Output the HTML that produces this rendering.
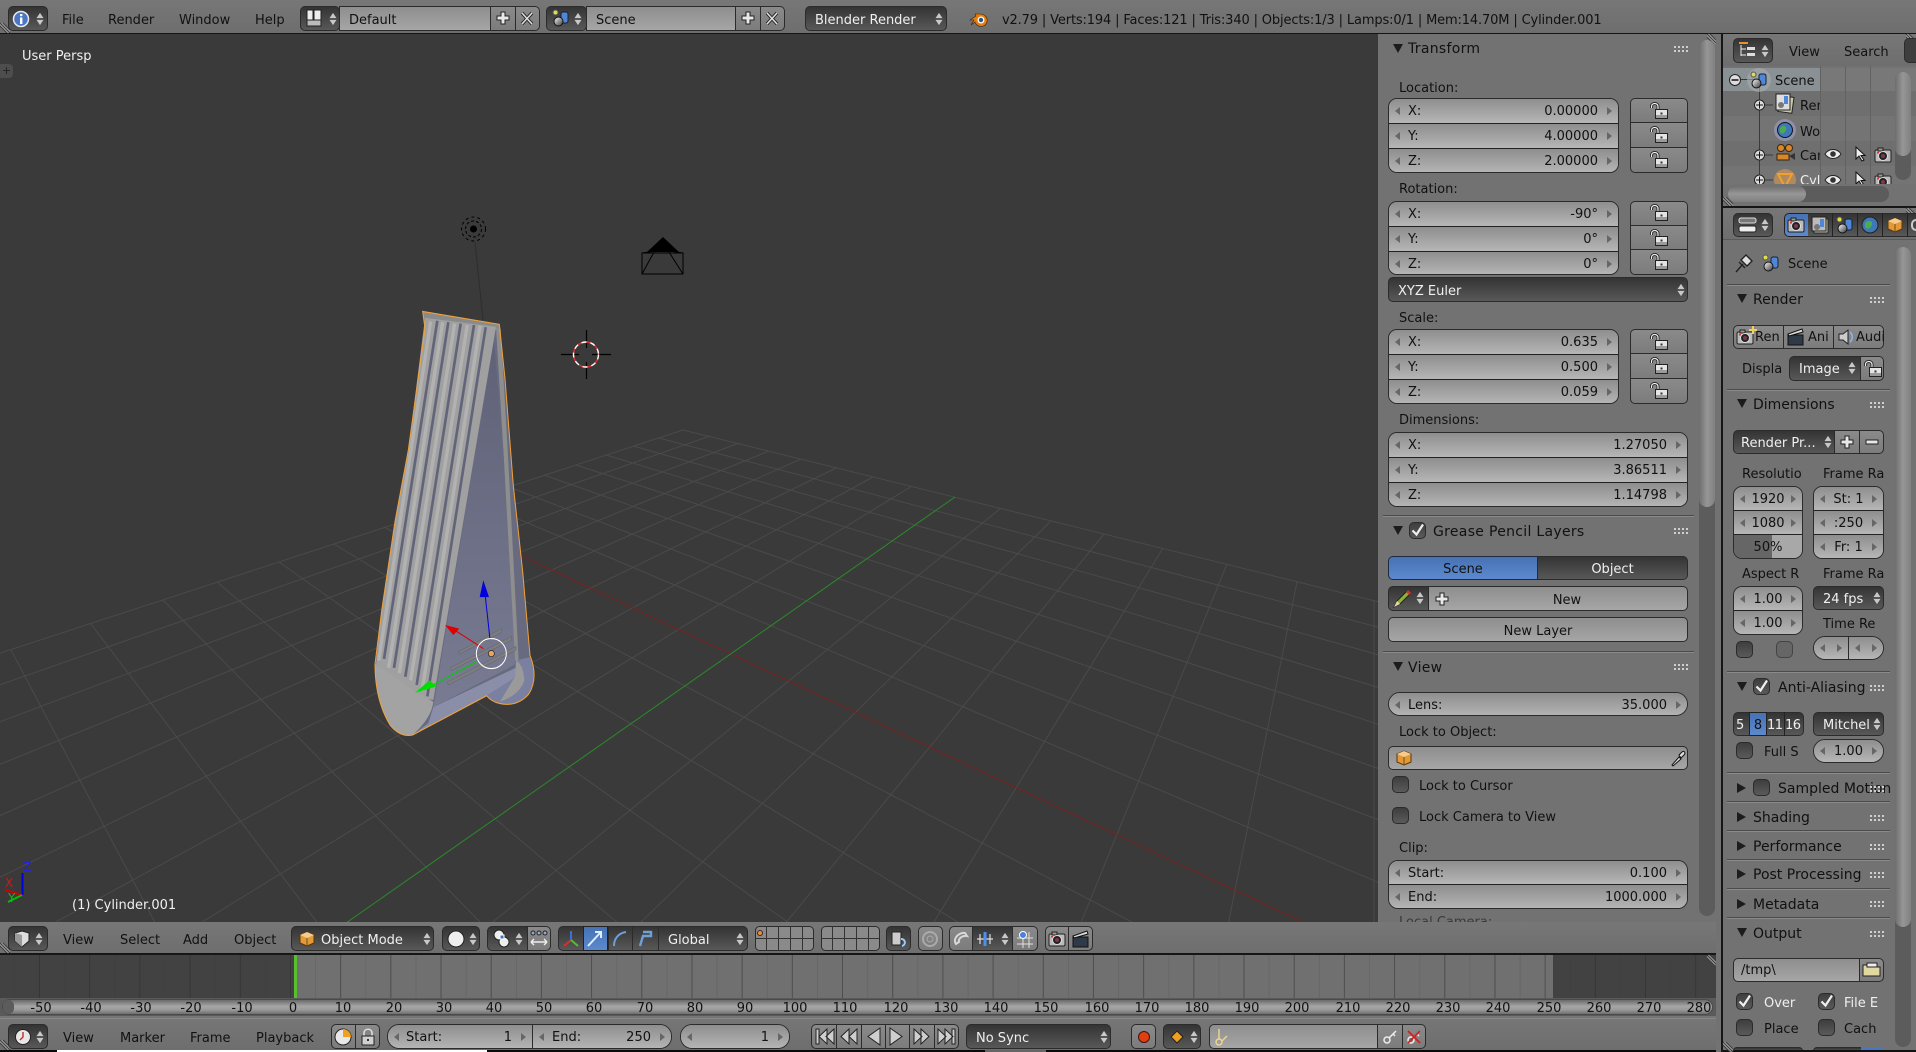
<!DOCTYPE html>
<html><head><meta charset="utf-8"><title>Blender</title>
<style>
html,body{margin:0;padding:0;background:#727272;width:1916px;height:1052px;overflow:hidden}
body{position:relative;font-family:"DejaVu Sans","Liberation Sans",sans-serif;font-size:13px;color:#111}
div{position:absolute;white-space:nowrap;box-sizing:border-box}
svg{position:absolute;overflow:visible}
.t{height:16px;line-height:16px;margin-top:1px}
.w{color:#f0f0f0}
.ls{letter-spacing:.3px}
.dk{background:linear-gradient(#343434,#585858);border:1px solid #2b2b2b;border-radius:5px;color:#f0f0f0}
.gb{background:linear-gradient(#8e8e8e,#a6a6a6);border:1px solid #2b2b2b;border-radius:5px}
.pb{background:linear-gradient(#8a8a8a,#7c7c7c);border:1px solid #2b2b2b;border-radius:5px}
.n{border:1px solid #2b2b2b;border-radius:9px;overflow:hidden;background:#9a9a9a}
.r{left:0;right:0;background:linear-gradient(#8e8e8e,#b6b6b6);border-bottom:1px solid #222}
.r:last-child{border-bottom:0}
.r .k{left:19px;top:50%;margin-top:-7px;height:16px;line-height:16px}
.r .v{right:20px;top:50%;margin-top:-7px;height:16px;line-height:16px}
.r .m{left:0;right:0;text-align:center;top:50%;margin-top:-7px;height:16px;line-height:16px}
.r i,.n i{position:absolute;top:50%;margin-top:-4px;width:0;height:0;border-top:4px solid transparent;border-bottom:4px solid transparent}
i.a{left:6px;border-right:5px solid #666}
i.c{right:6px;border-left:5px solid #666}
.cb{background:linear-gradient(#3e3e3e,#5a5a5a);border:1px solid #2b2b2b;border-radius:5px;width:17px;height:17px}
.ln{height:1px;background:#4b4b4b;border-bottom:1px solid #8a8a8a;height:2px}
.tr{width:0;height:0;border-left:5px solid transparent;border-right:5px solid transparent;border-top:9px solid #1c1c1c}
.trr{width:0;height:0;border-top:5px solid transparent;border-bottom:5px solid transparent;border-left:9px solid #1c1c1c}
.hd{background:linear-gradient(#777,#6e6e6e)}
.tl{text-align:center;width:40px;height:16px;line-height:16px;margin-top:2px}
</style></head><body>

<svg width="0" height="0" style="position:absolute">
<defs>
<linearGradient id="gs" x1="0" y1="0" x2="1" y2="1"><stop offset="0" stop-color="#fff"/><stop offset="1" stop-color="#333"/></linearGradient>
<linearGradient id="pg" x1="0" y1="0" x2="0" y2="1"><stop offset="0" stop-color="#5f6277"/><stop offset="1" stop-color="#787b92"/></linearGradient>
<symbol id="ud" viewBox="0 0 8 16" overflow="visible"><path d="M4 1 8 7H0zM0 9h8l-4 6z" fill="#c8c8c8"/></symbol>
<symbol id="lock" viewBox="0 0 18 18" overflow="visible"><path d="M1.500 6V4.500C1.500 .5 8 .5 8 4.500V8" fill="none" stroke="#222" stroke-width="3"/><path d="M1.500 6V4.500C1.500 .5 8 .5 8 4.500V8" fill="none" stroke="#f0f0f0" stroke-width="1.200"/><rect x="5.500" y="7.500" width="12" height="9" fill="#e4e4e4" stroke="#222"/><rect x="6" y="13" width="11" height="3" fill="#9a9a9a"/><rect x="10.500" y="10.500" width="2" height="2" fill="#333"/></symbol>
<symbol id="plus" viewBox="0 0 16 16" overflow="visible"><path d="M6 2h4v4h4v4h-4v4H6v-4H2V6h4z" fill="#e8e8e8" stroke="#222"/></symbol>
<symbol id="minus" viewBox="0 0 16 16" overflow="visible"><rect x="2" y="6" width="12" height="4" fill="#e8e8e8" stroke="#222"/></symbol>
<symbol id="x" viewBox="0 0 16 16" overflow="visible"><path d="M3 3 13 14M13 3 3 14" stroke="#222" stroke-width="3.400" fill="none"/><path d="M3 3 13 14M13 3 3 14" stroke="#ddd" stroke-width="1.600" fill="none"/></symbol>
<symbol id="scene" viewBox="0 0 18 18" overflow="visible"><rect x="9" y="3" width="7" height="11" rx="2" fill="#4f86d8" stroke="#123"/><circle cx="3.500" cy="3.500" r="2.500" fill="#dcdc50" stroke="#555"/><circle cx="6.500" cy="12.500" r="4.500" fill="url(#gs)" stroke="#111"/></symbol>
<symbol id="cube" viewBox="0 0 16 16" overflow="visible"><path d="M8 1 15 4V12L8 15 1 12V4z" fill="#e09a3a" stroke="#5a3508"/><path d="M1 4 8 7 15 4 8 1z" fill="#f6cc8c"/><path d="M8 7V15" stroke="#7a4a10"/></symbol>
<symbol id="cam" viewBox="0 0 18 18" overflow="visible"><rect x="1" y="4" width="16" height="12" rx="1.500" fill="#bbb" stroke="#222"/><rect x="4" y="2" width="5" height="3" fill="#999" stroke="#222"/><circle cx="9" cy="10" r="4.500" fill="#222" stroke="#ddd"/><circle cx="9" cy="10" r="2" fill="#7a3a4a"/><rect x="3" y="6" width="2" height="1.500" fill="#d33"/></symbol>
<symbol id="eye" viewBox="0 0 18 12" overflow="visible"><path d="M1 6C5 0 13 0 17 6 13 12 5 12 1 6z" fill="#eee" stroke="#222"/><circle cx="9" cy="6" r="2.800" fill="#333"/></symbol>
<symbol id="arrow" viewBox="0 0 12 16" overflow="visible"><path d="M2 1V13L5 10 8 15 10 14 7 9.500H11z" fill="#eee" stroke="#111"/></symbol>
<symbol id="dots" viewBox="0 0 14 6" overflow="visible"><path d="M0 0h2v2H0zM4 0h2v2H4zM8 0h2v2H8zM12 0h2v2h-2zM0 4h2v2H0zM4 4h2v2H4zM8 4h2v2H8zM12 4h2v2h-2z" fill="#cfcfcf"/></symbol>
<symbol id="hat" viewBox="0 0 10 10" overflow="visible"><path d="M0 0 10 10M0 3 7 10M3 0 10 7" stroke="#3c3c3c" stroke-width="1" fill="none"/><path d="M0 1.500 8.500 10M1.500 0 10 8.500" stroke="#a0a0a0" stroke-width="1" fill="none"/></symbol>
<symbol id="check" viewBox="0 0 17 17" overflow="visible"><path d="M3.500 8.500 7.500 12.500 14 2.500" fill="none" stroke="#f0f0f0" stroke-width="2.200"/></symbol>
<symbol id="key" viewBox="0 0 16 16" overflow="visible"><circle cx="5" cy="11" r="3" fill="none" stroke="#eee" stroke-width="1.500"/><path d="M7 9 14 2M11 5 13 7" stroke="#eee" stroke-width="1.500"/></symbol>
<symbol id="clock" viewBox="0 0 18 18" overflow="visible"><circle cx="9" cy="9" r="7.500" fill="#e8e8e8" stroke="#222"/><path d="M9 4V9L6 12" stroke="#c33" stroke-width="1.500" fill="none"/></symbol>
</defs>
</svg>

<!-- top bar -->
<div class="hd" style="left:0;top:0;width:1916px;height:33px"></div>
<div style="left:0;top:33px;width:1916px;height:1px;background:#141414"></div>
<svg width="10" height="10" style="left:0;top:23px"><use href="#hat"/></svg>
<div class="dk" style="left:8px;top:6px;width:40px;height:25px"></div>
<svg width="18" height="18" style="left:12px;top:10px"><circle cx="9" cy="9" r="7.500" fill="#4a76c4" stroke="#e8e8e8" stroke-width="1.500"/><rect x="8" y="7.500" width="2.400" height="6.500" fill="#fff"/><rect x="8" y="4" width="2.400" height="2.200" fill="#fff"/></svg>
<svg width="8" height="14" style="left:36px;top:12px"><use href="#ud"/></svg>
<div class="t" style="left:62px;top:12px">File</div>
<div class="t" style="left:108px;top:12px">Render</div>
<div class="t" style="left:179px;top:12px">Window</div>
<div class="t" style="left:255px;top:12px">Help</div>
<div class="dk" style="left:300px;top:6px;width:40px;height:25px"></div>
<svg width="16" height="18" style="left:307px;top:10px"><rect x="0" y="0" width="6" height="16" fill="#eee" stroke="#222"/><rect x="7" y="0" width="7" height="16" fill="#eee" stroke="#222"/><rect x="0" y="10" width="14" height="6" fill="#bbb" stroke="#222"/></svg>
<svg width="8" height="14" style="left:329px;top:12px"><use href="#ud"/></svg>
<div class="gb" style="left:339px;top:6px;width:152px;height:25px;border-radius:0"></div><div class="t" style="left:349px;top:12px">Default</div>
<div class="pb" style="left:490px;top:6px;width:26px;height:25px;border-radius:0"></div>
<div class="pb" style="left:515px;top:6px;width:25px;height:25px;border-radius:0 5px 5px 0"></div>
<svg width="16" height="16" style="left:495px;top:10px"><use href="#plus"/></svg>
<svg width="16" height="16" style="left:519px;top:10px"><use href="#x"/></svg>
<div class="dk" style="left:546px;top:6px;width:41px;height:25px"></div>
<svg width="18" height="18" style="left:552px;top:9px"><use href="#scene"/></svg>
<svg width="8" height="14" style="left:574px;top:12px"><use href="#ud"/></svg>
<div class="gb" style="left:586px;top:6px;width:150px;height:25px;border-radius:0"></div><div class="t" style="left:596px;top:12px">Scene</div>
<div class="pb" style="left:735px;top:6px;width:26px;height:25px;border-radius:0"></div>
<div class="pb" style="left:760px;top:6px;width:25px;height:25px;border-radius:0 5px 5px 0"></div>
<svg width="16" height="16" style="left:740px;top:10px"><use href="#plus"/></svg>
<svg width="16" height="16" style="left:764px;top:10px"><use href="#x"/></svg>
<div class="dk" style="left:805px;top:6px;width:142px;height:25px"></div><div class="t w" style="left:815px;top:12px">Blender Render</div>
<svg width="8" height="14" style="left:935px;top:12px"><use href="#ud"/></svg>
<svg width="20" height="18" style="left:969px;top:11px"><path d="M1 9 7 5 6 3H11C16 3 19 7 18 11 17 15 12 17 8 14 6 12 6 11 6 11L2 14 5 9z" fill="#e87d0d" stroke="#3a2505" stroke-width=".6"/><circle cx="12" cy="9" r="3.500" fill="#fff"/><circle cx="12" cy="9" r="2.200" fill="#265787"/></svg>
<div class="t" style="left:1002px;top:12px;letter-spacing:-.14px">v2.79 | Verts:194 | Faces:121 | Tris:340 | Objects:1/3 | Lamps:0/1 | Mem:14.70M | Cylinder.001</div>

<!-- viewport -->
<div style="left:0;top:34px;width:1378px;height:888px;background:#3a3a3a;overflow:hidden">
<svg width="1378" height="888" style="left:0;top:0;overflow:hidden" viewBox="0 34 1378 888">
<g stroke="#4a4a4a" stroke-width="1" fill="none">
<path d="M683 430-119 692M710 436-112 724M739 443-104 761M769 451-95 803M801 459-84 853M836 468-71 912M873 477 41 930M912 486 189 930M1001 508 483 930M1051 521 633 930M1104 534 780 930M1163 548 929 930M1227 564 1078 930M1297 582 1227 930M1374 600V930"/>
<path d="M683 430 1460 622M659 438 1465 650M633 446 1472 681M606 455 1480 718M576 465 1489 760M544 475 1499 811M509 487 1512 871M471 499 1491 930M384 527 1147 930M334 544 971 930M279 562 799 930M217 582 626 930M163 600 488 930M91 624 323 930M11 650 159 930M-79 680-3 930"/>
</g>
<path d="M430 513 1320 930" stroke="#7a2020" stroke-width="1" fill="none"/>
<path d="M955 497 336 930" stroke="#2a8a2a" stroke-width="1" fill="none"/>

<!-- lamp -->
<path d="M475 242 483 320" stroke="#2e2e2e" stroke-width="1"/>
<circle cx="473.500" cy="229" r="3.500" fill="#000"/>
<circle cx="473.500" cy="229" r="8" fill="none" stroke="#000" stroke-dasharray="3 2"/>
<circle cx="473.500" cy="229" r="12" fill="none" stroke="#000" stroke-dasharray="3 3"/>
<!-- camera -->
<path d="M642 253H683V274H642zM642 253 663 250M683 253 663 250M654 252 642 274M669 252 683 274" fill="none" stroke="#000"/>
<path d="M663 237 647 252H679z" fill="#000"/>
<!-- cursor -->
<path d="M561 354.500H579M592 354.500H611M586.500 330V348M586.500 362V379" stroke="#000" stroke-width="1.200"/>
<circle cx="586" cy="354.500" r="12.500" fill="none" stroke="#e03030" stroke-width="1.400"/>
<circle cx="586" cy="354.500" r="12.500" fill="none" stroke="#fff" stroke-width="1.400" stroke-dasharray="5 4"/>

<!-- mesh : zoom coords -->
<g transform="translate(340 200) scale(.33333 .35714)">
<path d="M248 312 478 348 495 500 520 800 548 1040 570 1275Q597 1340 565 1385 530 1420 480 1410 455 1405 440 1388L218 1498Q180 1505 150 1470 105 1400 105 1300L125 1150 165 900 205 700 255 360z" fill="#686b80"/>
<path d="M248 312 478 348 482 365 255 345z" fill="#8a8a8a"/>
<path d="M468 355 482 362 503 700 536 1290 524 1290 490 700z" fill="#8e8e8e"/>
<path d="M462 395 490 700 526 1300 280 1420z" fill="url(#pg)"/>
<path d="M255 330 468 355 280 1400 250 1395 108 1300 125 1150 165 900 205 700z" fill="#a0a0a0"/>
<g stroke="#b2b2b2" stroke-width="10" fill="none"><path d="M272 340 116 1290M308 342 146 1310M344 346 178 1325M382 350 212 1345M420 352 246 1375"/></g>
<g stroke="#62657a" stroke-width="8" fill="none"><path d="M292 338 132 1285M325 342 162 1310M362 346 196 1335M402 350 230 1358M437 356 262 1390"/></g>
<path d="M280 1420 527 1310 530 1335 440 1388 218 1498 265 1465z" fill="#8a8ea8"/>
<path d="M108 1300 225 1375 280 1405Q275 1450 218 1498 180 1505 150 1470 105 1400 105 1300z" fill="#a3a3a3"/>
<path d="M528 1290 548 1285 570 1280Q597 1340 565 1385 530 1420 480 1410 455 1405 440 1388L528 1335z" fill="#7c80a0"/>
<path d="M528 1290Q550 1300 553 1345 540 1385 480 1405L525 1335z" fill="#9a9a9a"/>
<path d="M355 1265 485 1200V1210L358 1272zM330 1310 515 1222V1232L333 1318zM322 1350 528 1250V1260L325 1358z" fill="#7d7d7d" stroke="#55576a" stroke-width="1"/>
<path d="M248 312 478 348 495 500 520 800 548 1040 570 1275Q597 1340 565 1385 530 1420 480 1410 455 1405 440 1388L218 1498Q180 1505 150 1470 105 1400 105 1300L125 1150 165 900 205 700 255 360z" fill="none" stroke="#f0a23c" stroke-width="3"/>
<path d="M436 1110 450 1230" stroke="#0000dd" stroke-width="3"/>
<path d="M430 1065 419 1112H447z" fill="#0000e0"/>
<path d="M345 1205 430 1256" stroke="#dd0000" stroke-width="3"/>
<path d="M315 1190 358 1200 340 1218z" fill="#e00000"/>
<path d="M275 1360 415 1290" stroke="#00cc00" stroke-width="3"/>
<path d="M225 1380 268 1345 290 1362z" fill="#00dd00"/>
<ellipse cx="454" cy="1270" rx="45" ry="42" fill="none" stroke="#fff" stroke-width="3"/>
<ellipse cx="454" cy="1270" rx="9" ry="9" fill="#eda35c" stroke="#222" stroke-width="2"/>
</g>

<!-- corner axes -->
<path d="M22.500 895V873" stroke="#0000e0" stroke-width="2"/>
<path d="M22 895 5 890" stroke="#d00000" stroke-width="2"/>
<path d="M22 895 8 902" stroke="#00c000" stroke-width="2"/>
</svg>
<div class="t w" style="left:22px;top:14px">User Persp</div>
<div class="t w" style="left:72px;top:863px">(1) Cylinder.001</div>
<div style="left:0;top:30px;width:13px;height:14px;background:#4d4d4d;border-radius:0 4px 4px 0;color:#222;font-size:11px;line-height:14px;text-align:center">+</div>
</div>
<div class="t" style="left:23px;top:858px;color:#2222dd;font-size:12px">Z</div>
<div class="t" style="left:5px;top:874px;color:#c02020;font-size:12px">X</div>
<div class="t" style="left:8px;top:889px;color:#20b020;font-size:12px">Y</div>

<!-- N panel -->
<div style="left:1378px;top:34px;width:338px;height:888px;background:#727272;overflow:hidden" id="np"></div>
<svg width="10" height="10" style="left:1707px;top:34px"><use href="#hat"/></svg>
<div style="left:1699px;top:40px;width:16px;height:876px;background:#5c5c5c;border-radius:8px"></div>
<div style="left:1699px;top:40px;width:16px;height:467px;background:linear-gradient(90deg,#6e6e6e,#969696,#808080);border-radius:8px"></div>

<div class="tr" style="left:1393px;top:44px"></div><div class="t ls" style="left:1408px;top:40px;font-size:14px">Transform</div>
<svg width="14" height="6" style="left:1674px;top:46px"><use href="#dots"/></svg>

<div class="t" style="left:1399px;top:80px">Location:</div>
<div class="n" style="left:1388px;top:98px;width:231px;height:75px">
<div class="r" style="top:0;height:25px"><i class="a"></i><i class="c"></i><div class="k">X:</div><div class="v">0.00000</div></div>
<div class="r" style="top:25px;height:25px"><i class="a"></i><i class="c"></i><div class="k">Y:</div><div class="v">4.00000</div></div>
<div class="r" style="top:50px;height:24px"><i class="a"></i><i class="c"></i><div class="k">Z:</div><div class="v">2.00000</div></div></div>
<div class="pb" style="left:1630px;top:98px;width:58px;height:25px;border-radius:5px 5px 0 0"></div>
<div class="pb" style="left:1630px;top:122px;width:58px;height:26px;border-radius:0"></div>
<div class="pb" style="left:1630px;top:147px;width:58px;height:26px;border-radius:0 0 5px 5px"></div>
<svg width="18" height="18" style="left:1650px;top:102px"><use href="#lock"/></svg>
<svg width="18" height="18" style="left:1650px;top:126px"><use href="#lock"/></svg>
<svg width="18" height="18" style="left:1650px;top:151px"><use href="#lock"/></svg>

<div class="t" style="left:1399px;top:181px">Rotation:</div>
<div class="n" style="left:1388px;top:201px;width:231px;height:74px">
<div class="r" style="top:0;height:25px"><i class="a"></i><i class="c"></i><div class="k">X:</div><div class="v">-90°</div></div>
<div class="r" style="top:25px;height:25px"><i class="a"></i><i class="c"></i><div class="k">Y:</div><div class="v">0°</div></div>
<div class="r" style="top:50px;height:23px"><i class="a"></i><i class="c"></i><div class="k">Z:</div><div class="v">0°</div></div></div>
<div class="pb" style="left:1630px;top:201px;width:58px;height:25px;border-radius:5px 5px 0 0"></div>
<div class="pb" style="left:1630px;top:225px;width:58px;height:25px;border-radius:0"></div>
<div class="pb" style="left:1630px;top:249px;width:58px;height:26px;border-radius:0 0 5px 5px"></div>
<svg width="18" height="18" style="left:1650px;top:204px"><use href="#lock"/></svg>
<svg width="18" height="18" style="left:1650px;top:229px"><use href="#lock"/></svg>
<svg width="18" height="18" style="left:1650px;top:253px"><use href="#lock"/></svg>

<div class="dk" style="left:1388px;top:277px;width:300px;height:25px"></div><div class="t w" style="left:1398px;top:283px">XYZ Euler</div>
<svg width="8" height="14" style="left:1677px;top:283px"><use href="#ud"/></svg>

<div class="t" style="left:1399px;top:310px">Scale:</div>
<div class="n" style="left:1388px;top:329px;width:231px;height:75px">
<div class="r" style="top:0;height:25px"><i class="a"></i><i class="c"></i><div class="k">X:</div><div class="v">0.635</div></div>
<div class="r" style="top:25px;height:25px"><i class="a"></i><i class="c"></i><div class="k">Y:</div><div class="v">0.500</div></div>
<div class="r" style="top:50px;height:24px"><i class="a"></i><i class="c"></i><div class="k">Z:</div><div class="v">0.059</div></div></div>
<div class="pb" style="left:1630px;top:329px;width:58px;height:25px;border-radius:5px 5px 0 0"></div>
<div class="pb" style="left:1630px;top:353px;width:58px;height:26px;border-radius:0"></div>
<div class="pb" style="left:1630px;top:378px;width:58px;height:26px;border-radius:0 0 5px 5px"></div>
<svg width="18" height="18" style="left:1650px;top:333px"><use href="#lock"/></svg>
<svg width="18" height="18" style="left:1650px;top:357px"><use href="#lock"/></svg>
<svg width="18" height="18" style="left:1650px;top:382px"><use href="#lock"/></svg>

<div class="t" style="left:1399px;top:412px">Dimensions:</div>
<div class="n" style="left:1388px;top:432px;width:300px;height:75px">
<div class="r" style="top:0;height:25px"><i class="a"></i><i class="c"></i><div class="k">X:</div><div class="v">1.27050</div></div>
<div class="r" style="top:25px;height:25px"><i class="a"></i><i class="c"></i><div class="k">Y:</div><div class="v">3.86511</div></div>
<div class="r" style="top:50px;height:24px"><i class="a"></i><i class="c"></i><div class="k">Z:</div><div class="v">1.14798</div></div></div>

<div class="ln" style="left:1383px;top:515px;width:311px"></div>
<div class="tr" style="left:1393px;top:526px"></div>
<div class="cb" style="left:1409px;top:522px"></div><svg width="17" height="17" style="left:1409px;top:522px"><use href="#check"/></svg>
<div class="t ls" style="left:1433px;top:523px;font-size:14px">Grease Pencil Layers</div>
<svg width="14" height="6" style="left:1674px;top:528px"><use href="#dots"/></svg>

<div style="left:1388px;top:556px;width:150px;height:24px;background:linear-gradient(#4672b4,#5c89cf);border:1px solid #1e2a40;border-radius:5px 0 0 5px;text-align:center;line-height:26px">Scene</div>
<div class="dk" style="left:1537px;top:556px;width:151px;height:24px;border-radius:0 5px 5px 0;text-align:center;line-height:26px">Object</div>

<div class="dk" style="left:1388px;top:586px;width:41px;height:25px;border-radius:5px 0 0 5px"></div>
<svg width="20" height="20" style="left:1392px;top:589px"><path d="M2 18 5 12 15 2 18 5 8 15z" fill="#8fb03a" stroke="#222"/><path d="M14 3 16 1 19 4 17 6z" fill="#d83030"/><path d="M2 18 5 12 8 15z" fill="#e8d8b0"/></svg>
<svg width="8" height="14" style="left:1416px;top:591px"><use href="#ud"/></svg>
<div class="gb" style="left:1428px;top:586px;width:260px;height:25px;border-radius:0 5px 5px 0;text-align:center;line-height:27px;padding-left:18px">New</div>
<svg width="16" height="16" style="left:1434px;top:591px"><use href="#plus"/></svg>
<div class="gb" style="left:1388px;top:617px;width:300px;height:25px;text-align:center;line-height:27px">New Layer</div>

<div class="ln" style="left:1383px;top:651px;width:311px"></div>
<div class="tr" style="left:1393px;top:662px"></div><div class="t ls" style="left:1408px;top:659px;font-size:14px">View</div>
<svg width="14" height="6" style="left:1674px;top:664px"><use href="#dots"/></svg>

<div class="n" style="left:1388px;top:692px;width:300px;height:24px;border-radius:12px">
<div class="r" style="top:0;height:24px"><i class="a"></i><i class="c"></i><div class="k">Lens:</div><div class="v">35.000</div></div></div>
<div class="t" style="left:1399px;top:724px">Lock to Object:</div>
<div class="gb" style="left:1388px;top:746px;width:300px;height:24px"></div>
<svg width="16" height="16" style="left:1396px;top:750px"><use href="#cube"/></svg>
<svg width="16" height="16" style="left:1670px;top:750px"><path d="M2 15 9 7 11 9 3 16zM9 5 12 2C14 0 16 3 14 5L11 8z" fill="#ddd" stroke="#111"/></svg>
<div class="cb" style="left:1392px;top:776px"></div><div class="t" style="left:1419px;top:778px">Lock to Cursor</div>
<div class="cb" style="left:1392px;top:807px"></div><div class="t" style="left:1419px;top:809px">Lock Camera to View</div>
<div class="t" style="left:1399px;top:840px">Clip:</div>
<div class="n" style="left:1388px;top:860px;width:300px;height:49px;border-radius:10px">
<div class="r" style="top:0;height:24px"><i class="a"></i><i class="c"></i><div class="k">Start:</div><div class="v">0.100</div></div>
<div class="r" style="top:24px;height:24px"><i class="a"></i><i class="c"></i><div class="k">End:</div><div class="v">1000.000</div></div></div>
<div style="left:1399px;top:914px;width:200px;height:8px;overflow:hidden"><div class="t" style="left:0;top:0;color:#3a3a3a">Local Camera:</div></div>

<!-- 3D view header -->
<div class="hd" style="left:0;top:922px;width:1721px;height:32px"></div>
<div style="left:0;top:953px;width:1721px;height:2px;background:#161616"></div>
<svg width="10" height="10" style="left:0;top:943px"><use href="#hat"/></svg>
<div class="dk" style="left:8px;top:926px;width:40px;height:25px"></div>
<svg width="16" height="18" style="left:14px;top:930px"><path d="M1 3 8 1 15 3V11L8 17 1 11z" fill="#ddd" stroke="#222"/><path d="M1 3 8 5V17L1 11z" fill="#999"/></svg>
<svg width="8" height="14" style="left:35px;top:932px"><use href="#ud"/></svg>
<div class="t" style="left:63px;top:932px">View</div>
<div class="t" style="left:120px;top:932px">Select</div>
<div class="t" style="left:183px;top:932px">Add</div>
<div class="t" style="left:234px;top:932px">Object</div>
<div class="dk" style="left:291px;top:926px;width:143px;height:25px"></div>
<svg width="16" height="16" style="left:299px;top:931px"><use href="#cube"/></svg>
<div class="t w" style="left:321px;top:932px">Object Mode</div>
<svg width="8" height="14" style="left:423px;top:932px"><use href="#ud"/></svg>
<div class="dk" style="left:442px;top:926px;width:38px;height:25px"></div>
<svg width="18" height="18" style="left:447px;top:930px"><circle cx="9" cy="9" r="8" fill="#eee" stroke="#222"/></svg>
<svg width="8" height="14" style="left:469px;top:932px"><use href="#ud"/></svg>
<div class="dk" style="left:487px;top:926px;width:41px;height:25px;border-radius:5px 0 0 5px"></div>
<svg width="18" height="18" style="left:493px;top:929px"><circle cx="6" cy="6" r="5" fill="#eee" stroke="#222"/><circle cx="11" cy="13" r="5" fill="#eee" stroke="#222"/><rect x="7" y="6" width="4" height="4" fill="#3a6fd0" stroke="#fff"/></svg>
<svg width="8" height="14" style="left:515px;top:932px"><use href="#ud"/></svg>
<div class="pb" style="left:527px;top:926px;width:24px;height:25px;border-radius:0 5px 5px 0"></div>
<svg width="18" height="18" style="left:530px;top:930px"><path d="M1 12H17M1 12 4 9M1 12 4 15M17 12 14 9M17 12 14 15" stroke="#eee" fill="none" stroke-width="1.400"/><circle cx="3" cy="3" r="2" fill="#9ab" stroke="#223"/><circle cx="9" cy="3" r="2" fill="#9ab" stroke="#223"/><circle cx="15" cy="3" r="2" fill="#9ab" stroke="#223"/></svg>
<div class="dk" style="left:558px;top:926px;width:26px;height:25px;border-radius:5px 0 0 5px"></div>
<svg width="18" height="18" style="left:562px;top:930px"><path d="M9 10V1" stroke="#3a6fe0" stroke-width="2"/><path d="M9 10 2 16" stroke="#d83030" stroke-width="2"/><path d="M9 10 16 16" stroke="#50c030" stroke-width="2"/></svg>
<div style="left:583px;top:926px;width:25px;height:25px;background:linear-gradient(#4672b4,#5c89cf);border:1px solid #222"></div>
<svg width="16" height="18" style="left:587px;top:930px"><path d="M1 16 13 3M8 2H14V8" stroke="#ddeeff" fill="none" stroke-width="2"/></svg>
<div class="dk" style="left:608px;top:926px;width:25px;height:25px;border-radius:0"></div>
<svg width="16" height="18" style="left:612px;top:930px"><path d="M2 16C2 8 7 3 14 2" stroke="#6f9fd8" fill="none" stroke-width="2"/></svg>
<div class="dk" style="left:632px;top:926px;width:27px;height:25px;border-radius:0"></div>
<svg width="16" height="18" style="left:637px;top:930px"><path d="M3 16 6 6H14V2H6" stroke="#6f9fd8" fill="none" stroke-width="2.400"/></svg>
<div class="dk" style="left:658px;top:926px;width:90px;height:25px;border-radius:0 5px 5px 0"></div>
<div class="t w" style="left:668px;top:932px">Global</div>
<svg width="8" height="14" style="left:736px;top:932px"><use href="#ud"/></svg>
<svg width="58" height="25" style="left:755px;top:926px"><rect x=".5" y=".5" width="58" height="24" rx="4" fill="#8a8a8a" stroke="#2b2b2b"/><path d="M0 12.500H58M11.500 0V25M23.500 0V25M35.500 0V25M47.500 0V25" stroke="#333"/><circle cx="5" cy="7" r="2.500" fill="#e89030" stroke="#422"/></svg>
<svg width="58" height="25" style="left:821px;top:926px"><rect x=".5" y=".5" width="58" height="24" rx="4" fill="#8a8a8a" stroke="#2b2b2b"/><path d="M0 12.500H58M11.500 0V25M23.500 0V25M35.500 0V25M47.500 0V25" stroke="#333"/></svg>
<div class="dk" style="left:886px;top:926px;width:25px;height:25px"></div>
<svg width="16" height="16" style="left:891px;top:931px"><rect x="1" y="1" width="9" height="13" fill="#ccc" stroke="#222"/><path d="M10 8C15 8 15 14 11 15" stroke="#9cf" fill="none" stroke-width="2"/></svg>
<div class="pb" style="left:918px;top:926px;width:25px;height:25px"></div>
<svg width="16" height="16" style="left:922px;top:931px"><circle cx="8" cy="8" r="7" fill="none" stroke="#aaa" stroke-width="2"/><circle cx="8" cy="8" r="3" fill="none" stroke="#aaa"/></svg>
<div class="pb" style="left:949px;top:926px;width:24px;height:25px;border-radius:5px 0 0 5px"></div>
<svg width="16" height="16" style="left:953px;top:931px"><path d="M3 13C-1 7 7 1 12 2L14 5C9 4 5 8 6 11z" fill="none" stroke="#d8d8d8" stroke-width="2"/></svg>
<div class="dk" style="left:972px;top:926px;width:41px;height:25px;border-radius:0"></div>
<svg width="18" height="16" style="left:976px;top:931px"><path d="M1 8H17M4 3V13M14 3V13" stroke="#ddd" stroke-width="1.200"/><path d="M9 1V15" stroke="#4a90f0" stroke-width="3"/></svg>
<svg width="8" height="14" style="left:1001px;top:932px"><use href="#ud"/></svg>
<div class="pb" style="left:1012px;top:926px;width:26px;height:25px;border-radius:0 5px 5px 0"></div>
<svg width="16" height="18" style="left:1017px;top:930px"><path d="M0 8H16M0 14H16M6 2V18M12 2V18" stroke="#e0e0e0"/><circle cx="6" cy="5" r="3.500" fill="#4a80e0" stroke="#fff"/></svg>
<div class="pb" style="left:1045px;top:926px;width:24px;height:25px;border-radius:5px 0 0 5px"></div>
<svg width="18" height="18" style="left:1048px;top:930px"><use href="#cam"/></svg>
<div class="pb" style="left:1068px;top:926px;width:25px;height:25px;border-radius:0 5px 5px 0"></div>
<svg width="18" height="18" style="left:1072px;top:930px"><rect x="1" y="7" width="15" height="10" fill="#2e3a48" stroke="#111"/><path d="M1 6 15 1 16 4 2 8z" fill="#ddd" stroke="#111"/></svg>

<!-- timeline -->
<div style="left:0;top:955px;width:1721px;height:43px;background-color:#424242"></div>
<div style="left:296px;top:955px;width:1257px;height:43px;background:#707070"></div>
<div style="left:0;top:955px;width:1721px;height:43px;background-image:linear-gradient(90deg,rgba(40,40,40,.4) 1px,transparent 1px),linear-gradient(90deg,rgba(50,50,50,.14) 1px,transparent 1px);background-size:50.2px 100%,25.1px 100%;background-position:39px 0,14px 0"></div>
<div style="left:294px;top:955px;width:3px;height:43px;background:#58c02c"></div>
<svg width="10" height="10" style="left:1707px;top:955px"><use href="#hat"/></svg>
<div style="left:0;top:998px;width:1716px;height:18px;background:#5a5a5a"></div>
<div style="left:2px;top:999px;width:1711px;height:16px;background:linear-gradient(#6a6a6a,#a6a6a6 45%,#9a9a9a 70%,#6e6e6e);border-radius:8px;border:1px solid #4a4a4a"></div>
<div style="left:3px;top:1000px;width:11px;height:14px;background:#5c5c5c;border-radius:6px"></div>
<div class="tl" style="left:21px;top:999px">-50</div><div class="tl" style="left:71px;top:999px">-40</div><div class="tl" style="left:121px;top:999px">-30</div><div class="tl" style="left:171px;top:999px">-20</div><div class="tl" style="left:222px;top:999px">-10</div><div class="tl" style="left:273px;top:999px">0</div><div class="tl" style="left:323px;top:999px">10</div><div class="tl" style="left:374px;top:999px">20</div><div class="tl" style="left:424px;top:999px">30</div><div class="tl" style="left:474px;top:999px">40</div><div class="tl" style="left:524px;top:999px">50</div><div class="tl" style="left:574px;top:999px">60</div><div class="tl" style="left:625px;top:999px">70</div><div class="tl" style="left:675px;top:999px">80</div><div class="tl" style="left:725px;top:999px">90</div><div class="tl" style="left:775px;top:999px">100</div><div class="tl" style="left:825px;top:999px">110</div><div class="tl" style="left:876px;top:999px">120</div><div class="tl" style="left:926px;top:999px">130</div><div class="tl" style="left:976px;top:999px">140</div><div class="tl" style="left:1026px;top:999px">150</div><div class="tl" style="left:1077px;top:999px">160</div><div class="tl" style="left:1127px;top:999px">170</div><div class="tl" style="left:1177px;top:999px">180</div><div class="tl" style="left:1227px;top:999px">190</div><div class="tl" style="left:1277px;top:999px">200</div><div class="tl" style="left:1328px;top:999px">210</div><div class="tl" style="left:1378px;top:999px">220</div><div class="tl" style="left:1428px;top:999px">230</div><div class="tl" style="left:1478px;top:999px">240</div><div class="tl" style="left:1529px;top:999px">250</div><div class="tl" style="left:1579px;top:999px">260</div><div class="tl" style="left:1629px;top:999px">270</div><div class="tl" style="left:1679px;top:999px">280</div>

<!-- timeline header -->
<div class="hd" style="left:0;top:1016px;width:1721px;height:34px"></div>
<div style="left:0;top:1018px;width:1721px;height:1px;background:#888"></div>
<svg width="10" height="10" style="left:0;top:1040px"><use href="#hat"/></svg>
<div class="dk" style="left:8px;top:1024px;width:40px;height:25px"></div>
<svg width="18" height="18" style="left:14px;top:1028px"><use href="#clock"/></svg>
<svg width="8" height="14" style="left:36px;top:1030px"><use href="#ud"/></svg>
<div class="t" style="left:63px;top:1030px">View</div>
<div class="t" style="left:120px;top:1030px">Marker</div>
<div class="t" style="left:190px;top:1030px">Frame</div>
<div class="t" style="left:256px;top:1030px">Playback</div>
<div class="pb" style="left:331px;top:1024px;width:25px;height:25px;border-radius:5px 0 0 5px"></div>
<svg width="18" height="18" style="left:334px;top:1028px"><circle cx="9" cy="9" r="8" fill="#e8e8e8" stroke="#222"/><path d="M9 9V1A8 8 0 0 1 17 9z" fill="#f0a020"/></svg>
<div class="pb" style="left:355px;top:1024px;width:25px;height:25px;border-radius:0 5px 5px 0"></div>
<svg width="14" height="18" style="left:361px;top:1028px"><path d="M3 8V5C3 0 11 0 11 5V8" fill="none" stroke="#ddd" stroke-width="1.600"/><rect x="1" y="8" width="12" height="9" fill="#d0d0d0" stroke="#222"/><rect x="6" y="11" width="2" height="2" fill="#333"/></svg>
<div class="n" style="left:387px;top:1024px;width:146px;height:25px;border-radius:12px 0 0 12px"><div class="r" style="top:0;height:24px"><i class="a"></i><i class="c"></i><div class="k" style="left:18px">Start:</div><div class="v">1</div></div></div>
<div class="n" style="left:532px;top:1024px;width:140px;height:25px;border-radius:0 12px 12px 0"><div class="r" style="top:0;height:24px"><i class="a"></i><i class="c"></i><div class="k" style="left:19px">End:</div><div class="v">250</div></div></div>
<div class="n" style="left:680px;top:1024px;width:110px;height:25px;border-radius:12px"><div class="r" style="top:0;height:24px"><i class="a"></i><i class="c"></i><div class="v">1</div></div></div>
<div class="pb" style="left:811px;top:1024px;width:148px;height:25px"></div>
<svg width="148" height="25" style="left:811px;top:1024px"><g stroke="#2b2b2b"><path d="M25.500 0V25M50.500 0V25M74.500 0V25M98.500 0V25M123.500 0V25"/></g><g fill="#cfcfcf" stroke="#222"><path d="M5 5V20H8V5zM16 5 8 12.500 16 20zM23 5 15 12.500 23 20z"/><path d="M38 5 30 12.500 38 20zM46 5 38 12.500 46 20z"/><path d="M69 4 57 12.500 69 21z"/><path d="M79 4 91 12.500 79 21z"/><path d="M103 5 111 12.500 103 20zM110 5 118 12.500 110 20z"/><path d="M127 5 135 12.500 127 20zM134 5 142 12.500 134 20zM141 5V20H144V5z"/></g></svg>
<div class="dk" style="left:966px;top:1024px;width:145px;height:25px"></div><div class="t w" style="left:976px;top:1030px">No Sync</div>
<svg width="8" height="14" style="left:1100px;top:1030px"><use href="#ud"/></svg>
<div class="pb" style="left:1131px;top:1024px;width:25px;height:25px"></div>
<svg width="14" height="14" style="left:1137px;top:1030px"><circle cx="7" cy="7" r="5.500" fill="#e04010" stroke="#411"/></svg>
<div class="dk" style="left:1163px;top:1024px;width:38px;height:25px"></div>
<svg width="14" height="14" style="left:1170px;top:1030px"><path d="M7 1 13 7 7 13 1 7z" fill="#f0a020" stroke="#222"/></svg>
<svg width="8" height="14" style="left:1190px;top:1030px"><use href="#ud"/></svg>
<div class="gb" style="left:1209px;top:1024px;width:169px;height:25px;border-radius:5px 0 0 5px"></div>
<svg width="16" height="18" style="left:1214px;top:1028px"><path d="M5 1V11M13 8 8 13" stroke="#eed890" stroke-width="1.400" fill="none"/><circle cx="5" cy="14" r="3" fill="none" stroke="#eed890" stroke-width="1.400"/></svg>
<div class="pb" style="left:1377px;top:1024px;width:26px;height:25px;border-radius:0"></div>
<svg width="16" height="16" style="left:1382px;top:1029px"><use href="#key"/></svg>
<div class="pb" style="left:1402px;top:1024px;width:24px;height:25px;border-radius:0 5px 5px 0"></div>
<svg width="16" height="16" style="left:1406px;top:1029px"><use href="#key"/></svg>
<svg width="16" height="16" style="left:1406px;top:1029px"><path d="M2 2 14 14M14 2 2 14" stroke="#d02020" stroke-width="1.800"/></svg>

<!-- bottom strip -->
<div style="left:0;top:1050px;width:1716px;height:2px;background:#0a0a0a"></div>
<div style="left:57px;top:1050px;width:430px;height:2px;background:#fff"></div>
<div style="left:985px;top:1050px;width:61px;height:2px;background:#666"></div>

<!-- vertical dividers -->
<div style="left:1716px;top:34px;width:6px;height:1018px;background:#727272"></div>
<div style="left:1721px;top:34px;width:2px;height:1018px;background:#161616"></div>

<!-- outliner -->
<div class="hd" style="left:1723px;top:34px;width:193px;height:32px"></div>
<svg width="10" height="10" style="left:1906px;top:34px"><use href="#hat"/></svg>
<div class="dk" style="left:1733px;top:38px;width:40px;height:25px"></div>
<svg width="18" height="16" style="left:1738px;top:42px"><path d="M1 1H9M3 3V14M3 7H8M3 13H8" stroke="#eee" fill="none"/><rect x="1" y="0" width="9" height="2" fill="#e89030"/><rect x="9" y="5" width="8" height="3" fill="#ddd"/><rect x="9" y="11" width="8" height="3" fill="#ddd"/></svg>
<svg width="8" height="14" style="left:1761px;top:44px"><use href="#ud"/></svg>
<div class="t" style="left:1789px;top:44px">View</div>
<div class="t" style="left:1844px;top:44px">Search</div>
<div style="left:1904px;top:38px;width:12px;height:25px;background:#3e3e3e;border:1px solid #2b2b2b;border-right:0;border-radius:5px 0 0 5px"></div>

<div style="left:1723px;top:66px;width:193px;height:141px;background:#727272;overflow:hidden">
<div style="left:0;top:2px;width:97px;height:23px;background:#899195"></div>
<div style="left:97px;top:2px;width:96px;height:23px;background:#787878"></div>
<div style="left:0;top:25px;width:193px;height:25px;background:#6f6f6f"></div>
<div style="left:0;top:50px;width:193px;height:25px;background:#747474"></div>
<div style="left:0;top:75px;width:193px;height:25px;background:#6f6f6f"></div>
<div style="left:0;top:100px;width:193px;height:25px;background:#747474"></div>
<div style="left:97px;top:0;width:1px;height:141px;background:#626262"></div>
<div style="left:122px;top:0;width:1px;height:141px;background:#626262"></div>
<div style="left:147px;top:0;width:1px;height:141px;background:#626262"></div>
</div>
<svg width="198" height="125" style="left:1723px;top:66px"><path d="M36.500 14V114M12 13.500H36M36 39H50M36 89H50M36 114H50" stroke="#3a3a3a" fill="none"/>
<circle cx="36" cy="14" r="12" fill="#a6acb0" opacity=".6"/>
<circle cx="12" cy="14" r="5.500" fill="#ddd" stroke="#222"/><path d="M8.500 14H15.500" stroke="#111" stroke-width="1.500"/>
<g fill="#ddd" stroke="#222"><circle cx="36.500" cy="39" r="5"/><circle cx="36.500" cy="89" r="5"/><circle cx="36.500" cy="114" r="5"/></g>
<path d="M33 39H40M36.500 35.500V42.500M33 89H40M36.500 85.500V92.500M33 114H40M36.500 110.500V117.500" stroke="#111"/>
<circle cx="62" cy="64" r="11" fill="#8d90a6"/>
<circle cx="62" cy="64" r="7.500" fill="#3f78b8" stroke="#112"/><path d="M57 62C60 58 64 60 63 64 61 68 59 69 57 66z" fill="#4caa50"/>
<circle cx="62" cy="114" r="11" fill="#b08a5e"/>
<path d="M55 108H69L62 121z" fill="none" stroke="#f0a030" stroke-width="2"/>
<rect x="54" y="88" width="12" height="6" fill="#d8882a" stroke="#3a2508"/><circle cx="58" cy="82" r="3.500" fill="#d8882a" stroke="#3a2508"/><circle cx="66" cy="82" r="3.500" fill="#d8882a" stroke="#3a2508"/><path d="M66 90 72 87V94z" fill="#333"/>
<rect x="56" y="30" width="14" height="16" fill="#c8c8a8" stroke="#222" transform="rotate(8 60 38)"/><rect x="53" y="28" width="14" height="16" fill="#ddd" stroke="#222"/><rect x="61" y="30" width="4" height="8" fill="#4f86d8"/><circle cx="58" cy="39" r="3" fill="#777"/>
</svg>
<svg width="18" height="18" style="left:1750px;top:71px"><use href="#scene"/></svg>
<div style="left:1723px;top:66px;width:97px;height:118px;overflow:hidden">
<div class="t" style="left:52px;top:7px">Scene</div>
<div class="t" style="left:77px;top:32px">Render</div>
<div class="t" style="left:77px;top:58px">World</div>
<div class="t" style="left:77px;top:82px">Camera</div>
<div class="t w" style="left:77px;top:107px">Cylinder</div>
</div>
<svg width="18" height="12" style="left:1824px;top:148px"><use href="#eye"/></svg>
<svg width="12" height="16" style="left:1854px;top:146px"><use href="#arrow"/></svg>
<svg width="18" height="18" style="left:1874px;top:146px"><use href="#cam"/></svg>
<svg width="18" height="12" style="left:1824px;top:174px"><use href="#eye"/></svg>
<svg width="12" height="16" style="left:1854px;top:171px"><use href="#arrow"/></svg>
<svg width="18" height="18" style="left:1874px;top:172px"><use href="#cam"/></svg>
<div style="left:1723px;top:184px;width:193px;height:23px;background:#727272"></div>
<div style="left:1895px;top:72px;width:16px;height:108px;background:#5c5c5c;border-radius:8px"></div>
<div style="left:1895px;top:72px;width:16px;height:84px;background:linear-gradient(90deg,#6e6e6e,#969696,#808080);border-radius:8px"></div>
<div style="left:1728px;top:186px;width:161px;height:16px;background:#5c5c5c;border-radius:8px"></div>
<div style="left:1728px;top:186px;width:78px;height:16px;background:linear-gradient(#6e6e6e,#969696,#808080);border-radius:8px"></div>
<svg width="10" height="10" style="left:1723px;top:197px"><use href="#hat"/></svg>
<div style="left:1723px;top:206px;width:193px;height:2px;background:#161616"></div>

<!-- properties -->
<div class="hd" style="left:1723px;top:208px;width:193px;height:31px"></div>
<div style="left:1723px;top:239px;width:193px;height:1px;background:#5a5a5a"></div>
<svg width="10" height="10" style="left:1906px;top:208px"><use href="#hat"/></svg>
<div class="dk" style="left:1733px;top:213px;width:40px;height:24px"></div>
<svg width="18" height="16" style="left:1738px;top:217px"><rect x="1" y="1" width="17" height="5" rx="2" fill="#777" stroke="#ddd"/><rect x="1" y="9" width="17" height="6" rx="2" fill="#eee" stroke="#222"/></svg>
<svg width="8" height="14" style="left:1761px;top:218px"><use href="#ud"/></svg>
<div style="left:1784px;top:213px;width:25px;height:24px;background:linear-gradient(#4672b4,#5c89cf);border:1px solid #222;border-radius:5px 0 0 5px"></div>
<div style="left:1808px;top:213px;width:108px;height:24px;background:linear-gradient(#343434,#585858);border-top:1px solid #2b2b2b;border-bottom:1px solid #2b2b2b"></div>
<div style="left:1832px;top:213px;width:1px;height:24px;background:#222"></div><div style="left:1857px;top:213px;width:1px;height:24px;background:#222"></div><div style="left:1882px;top:213px;width:1px;height:24px;background:#222"></div><div style="left:1907px;top:213px;width:1px;height:24px;background:#222"></div>
<svg width="18" height="18" style="left:1787px;top:216px"><use href="#cam"/></svg>
<svg width="18" height="18" style="left:1811px;top:216px"><rect x="3" y="3" width="14" height="14" fill="#c8c8a8" stroke="#222"/><rect x="1" y="1" width="14" height="14" fill="#bbb" stroke="#222"/><rect x="9" y="3" width="4" height="8" fill="#4f86d8"/><circle cx="6" cy="11" r="3" fill="#777"/></svg>
<svg width="18" height="18" style="left:1836px;top:216px"><use href="#scene"/></svg>
<svg width="18" height="18" style="left:1861px;top:216px"><circle cx="9" cy="9" r="8" fill="#3f78b8" stroke="#222"/><path d="M4 7C8 3 12 5 11 9 9 13 6 14 4 11z" fill="#4caa50"/></svg>
<svg width="16" height="16" style="left:1887px;top:217px"><use href="#cube"/></svg>
<div style="left:1911px;top:219px;width:5px;height:12px;border:2px solid #ccc;border-right:0;border-radius:6px 0 0 6px"></div>

<div style="left:1895px;top:247px;width:16px;height:800px;background:#5c5c5c;border-radius:8px"></div>
<div style="left:1895px;top:247px;width:16px;height:680px;background:linear-gradient(90deg,#6e6e6e,#969696,#808080);border-radius:8px"></div>

<svg width="20" height="20" style="left:1734px;top:254px"><path d="M2 18 9 10M7 6 12 1 18 7 13 12zM5 8 11 14" stroke="#222" fill="#ddd" stroke-width="1.400"/></svg>
<svg width="18" height="18" style="left:1762px;top:254px"><use href="#scene"/></svg>
<div class="t" style="left:1788px;top:256px">Scene</div>
<div class="ln" style="left:1727px;top:284px;width:163px"></div>
<div class="tr" style="left:1737px;top:294px"></div><div class="t" style="left:1753px;top:291px;font-size:14px">Render</div>
<svg width="14" height="6" style="left:1870px;top:297px"><use href="#dots"/></svg>
<div class="pb" style="left:1733px;top:325px;width:51px;height:24px;border-radius:5px 0 0 5px"></div>
<div class="pb" style="left:1783px;top:325px;width:51px;height:24px;border-radius:0"></div>
<div class="pb" style="left:1833px;top:325px;width:51px;height:24px;border-radius:0 5px 5px 0"></div>
<svg width="18" height="18" style="left:1736px;top:328px"><use href="#cam"/></svg>
<svg width="8" height="8" style="left:1749px;top:326px"><path d="M4 0V8M0 4H8" stroke="#f0d060" stroke-width="2"/></svg>
<svg width="18" height="18" style="left:1787px;top:328px"><rect x="1" y="7" width="15" height="10" fill="#2e3a48" stroke="#111"/><path d="M1 6 15 1 16 4 2 8z" fill="#ddd" stroke="#111"/></svg>
<svg width="18" height="16" style="left:1838px;top:329px"><path d="M1 5H5L10 1V15L5 11H1z" fill="#ccc" stroke="#222"/><path d="M12 3C15 6 15 10 12 13" stroke="#8ab4e8" fill="none" stroke-width="1.600"/></svg>
<div class="t" style="left:1755px;top:329px">Ren</div>
<div class="t" style="left:1808px;top:329px">Ani</div>
<div class="t" style="left:1856px;top:329px">Audi</div>

<div class="t" style="left:1742px;top:361px">Displa</div>
<div class="dk" style="left:1789px;top:356px;width:72px;height:25px;border-radius:5px 0 0 5px"></div><div class="t w" style="left:1799px;top:361px">Image</div>
<svg width="8" height="14" style="left:1848px;top:361px"><use href="#ud"/></svg>
<div class="pb" style="left:1860px;top:356px;width:24px;height:25px;border-radius:0 5px 5px 0"></div>
<svg width="18" height="18" style="left:1864px;top:360px"><use href="#lock"/></svg>
<div class="ln" style="left:1727px;top:389px;width:163px"></div>
<div class="tr" style="left:1737px;top:399px"></div><div class="t" style="left:1753px;top:396px;font-size:14px">Dimensions</div>
<svg width="14" height="6" style="left:1870px;top:402px"><use href="#dots"/></svg>

<div class="dk" style="left:1733px;top:430px;width:102px;height:24px;border-radius:5px 0 0 5px"></div><div class="t w" style="left:1741px;top:435px">Render Pr...</div>
<svg width="8" height="14" style="left:1824px;top:435px"><use href="#ud"/></svg>
<div class="pb" style="left:1834px;top:430px;width:26px;height:24px;border-radius:0"></div>
<div class="pb" style="left:1859px;top:430px;width:25px;height:24px;border-radius:0 5px 5px 0"></div>
<svg width="16" height="16" style="left:1839px;top:434px"><use href="#plus"/></svg>
<svg width="16" height="16" style="left:1864px;top:434px"><use href="#minus"/></svg>

<div class="t" style="left:1742px;top:466px">Resolutio</div>
<div class="t" style="left:1823px;top:466px">Frame Ra</div>
<div class="n" style="left:1733px;top:486px;width:70px;height:73px">
<div class="r" style="top:0;height:24px"><i class="a"></i><i class="c"></i><div class="m">1920</div></div>
<div class="r" style="top:24px;height:24px"><i class="a"></i><i class="c"></i><div class="m">1080</div></div>
<div class="r" style="top:48px;height:23px;background:linear-gradient(90deg,#666 0,#666 56%,#a8a8a8 56%)"><div class="m">50%</div></div></div>
<div class="n" style="left:1813px;top:486px;width:71px;height:73px">
<div class="r" style="top:0;height:24px"><i class="a"></i><i class="c"></i><div class="m">St: 1</div></div>
<div class="r" style="top:24px;height:24px"><i class="a"></i><i class="c"></i><div class="m">:250</div></div>
<div class="r" style="top:48px;height:23px"><i class="a"></i><i class="c"></i><div class="m">Fr: 1</div></div></div>

<div class="t" style="left:1742px;top:566px">Aspect R</div>
<div class="t" style="left:1823px;top:566px">Frame Ra</div>
<div class="n" style="left:1733px;top:586px;width:70px;height:49px">
<div class="r" style="top:0;height:24px"><i class="a"></i><i class="c"></i><div class="m">1.00</div></div>
<div class="r" style="top:24px;height:23px"><i class="a"></i><i class="c"></i><div class="m">1.00</div></div></div>
<div class="dk" style="left:1813px;top:586px;width:71px;height:24px"></div><div class="t w" style="left:1823px;top:591px">24 fps</div>
<svg width="8" height="14" style="left:1873px;top:591px"><use href="#ud"/></svg>
<div class="t" style="left:1823px;top:616px">Time Re</div>
<div class="n" style="left:1813px;top:636px;width:36px;height:24px;border-radius:12px 0 0 12px"><div class="r" style="top:0;height:22px"><i class="a"></i><i class="c"></i></div></div>
<div class="n" style="left:1848px;top:636px;width:36px;height:24px;border-radius:0 12px 12px 0"><div class="r" style="top:0;height:22px"><i class="a"></i><i class="c"></i></div></div>
<div class="cb" style="left:1736px;top:641px"></div>
<div class="cb" style="left:1776px;top:641px;background:#666;border-color:#444"></div>

<div class="ln" style="left:1727px;top:671px;width:163px"></div>
<div class="tr" style="left:1737px;top:682px"></div>
<div class="cb" style="left:1753px;top:678px"></div><svg width="17" height="17" style="left:1753px;top:678px"><use href="#check"/></svg>
<div class="t" style="left:1778px;top:679px;font-size:14px">Anti-Aliasing</div>
<svg width="14" height="6" style="left:1870px;top:685px"><use href="#dots"/></svg>
<div class="dk" style="left:1733px;top:712px;width:71px;height:24px"></div>
<div style="left:1749px;top:712px;width:18px;height:24px;background:linear-gradient(#4672b4,#5c89cf);border:1px solid #222;text-align:center;line-height:26px">8</div>
<div style="left:1784px;top:712px;width:1px;height:24px;background:#222"></div>
<div class="t w" style="left:1736px;top:717px">5</div><div class="t w" style="left:1767px;top:717px;font-size:13px;letter-spacing:-.5px">11</div><div class="t w" style="left:1785px;top:717px;letter-spacing:-.5px">16</div>
<div class="dk" style="left:1813px;top:712px;width:71px;height:24px"></div><div class="t w" style="left:1823px;top:717px">Mitchel</div>
<svg width="8" height="14" style="left:1873px;top:717px"><use href="#ud"/></svg>
<div class="cb" style="left:1736px;top:742px"></div><div class="t" style="left:1764px;top:744px">Full S</div>
<div class="n" style="left:1813px;top:739px;width:71px;height:24px;border-radius:12px"><div class="r" style="top:0;height:22px"><i class="a"></i><i class="c"></i><div class="m">1.00</div></div></div>

<div class="ln" style="left:1727px;top:772px;width:163px"></div>
<div class="trr" style="left:1737px;top:783px"></div><div class="cb" style="left:1753px;top:779px"></div>
<div class="t" style="left:1778px;top:780px;font-size:14px">Sampled Motion</div>
<svg width="14" height="6" style="left:1870px;top:786px"><use href="#dots"/></svg>
<div class="ln" style="left:1727px;top:801px;width:163px"></div>
<div class="trr" style="left:1737px;top:812px"></div><div class="t" style="left:1753px;top:809px;font-size:14px">Shading</div>
<svg width="14" height="6" style="left:1870px;top:815px"><use href="#dots"/></svg>
<div class="ln" style="left:1727px;top:830px;width:163px"></div>
<div class="trr" style="left:1737px;top:841px"></div><div class="t" style="left:1753px;top:838px;font-size:14px">Performance</div>
<svg width="14" height="6" style="left:1870px;top:844px"><use href="#dots"/></svg>
<div class="ln" style="left:1727px;top:859px;width:163px"></div>
<div class="trr" style="left:1737px;top:869px"></div><div class="t" style="left:1753px;top:866px;font-size:14px">Post Processing</div>
<svg width="14" height="6" style="left:1870px;top:872px"><use href="#dots"/></svg>
<div class="ln" style="left:1727px;top:888px;width:163px"></div>
<div class="trr" style="left:1737px;top:899px"></div><div class="t" style="left:1753px;top:896px;font-size:14px">Metadata</div>
<svg width="14" height="6" style="left:1870px;top:901px"><use href="#dots"/></svg>
<div class="ln" style="left:1727px;top:917px;width:163px"></div>
<div class="tr" style="left:1737px;top:928px"></div><div class="t" style="left:1753px;top:925px;font-size:14px">Output</div>
<svg width="14" height="6" style="left:1870px;top:931px"><use href="#dots"/></svg>

<div class="gb" style="left:1733px;top:958px;width:127px;height:24px;border-radius:5px 0 0 5px"></div><div class="t" style="left:1741px;top:962px">/tmp\</div>
<div class="pb" style="left:1859px;top:958px;width:25px;height:24px;border-radius:0 5px 5px 0"></div>
<svg width="20" height="16" style="left:1862px;top:962px"><path d="M1 14V3H7L9 5H18V14z" fill="#e0d8a0" stroke="#222"/><rect x="5" y="1" width="10" height="4" fill="#eee" stroke="#222"/></svg>
<div class="cb" style="left:1736px;top:993px"></div><svg width="17" height="17" style="left:1736px;top:993px"><use href="#check"/></svg><div class="t w" style="left:1764px;top:995px">Over</div>
<div class="cb" style="left:1818px;top:993px"></div><svg width="17" height="17" style="left:1818px;top:993px"><use href="#check"/></svg><div class="t w" style="left:1844px;top:995px">File E</div>
<div class="cb" style="left:1736px;top:1019px"></div><div class="t" style="left:1764px;top:1021px">Place</div>
<div class="cb" style="left:1818px;top:1019px"></div><div class="t" style="left:1844px;top:1021px">Cach</div>
<div style="left:1723px;top:1047px;width:193px;height:5px;overflow:hidden;background:#727272">
<div class="dk" style="left:10px;top:0;width:70px;height:5px;border-radius:4px 4px 0 0"></div>
<div class="dk" style="left:90px;top:0;width:71px;height:5px;border-radius:4px 4px 0 0"></div>
<div style="left:138px;top:0;width:23px;height:5px;background:#4a78c0"></div>
</div>
<div style="left:1723px;top:1050px;width:193px;height:2px;background:#111"></div>
<svg width="10" height="10" style="left:1723px;top:1042px"><use href="#hat"/></svg>
</body></html>
